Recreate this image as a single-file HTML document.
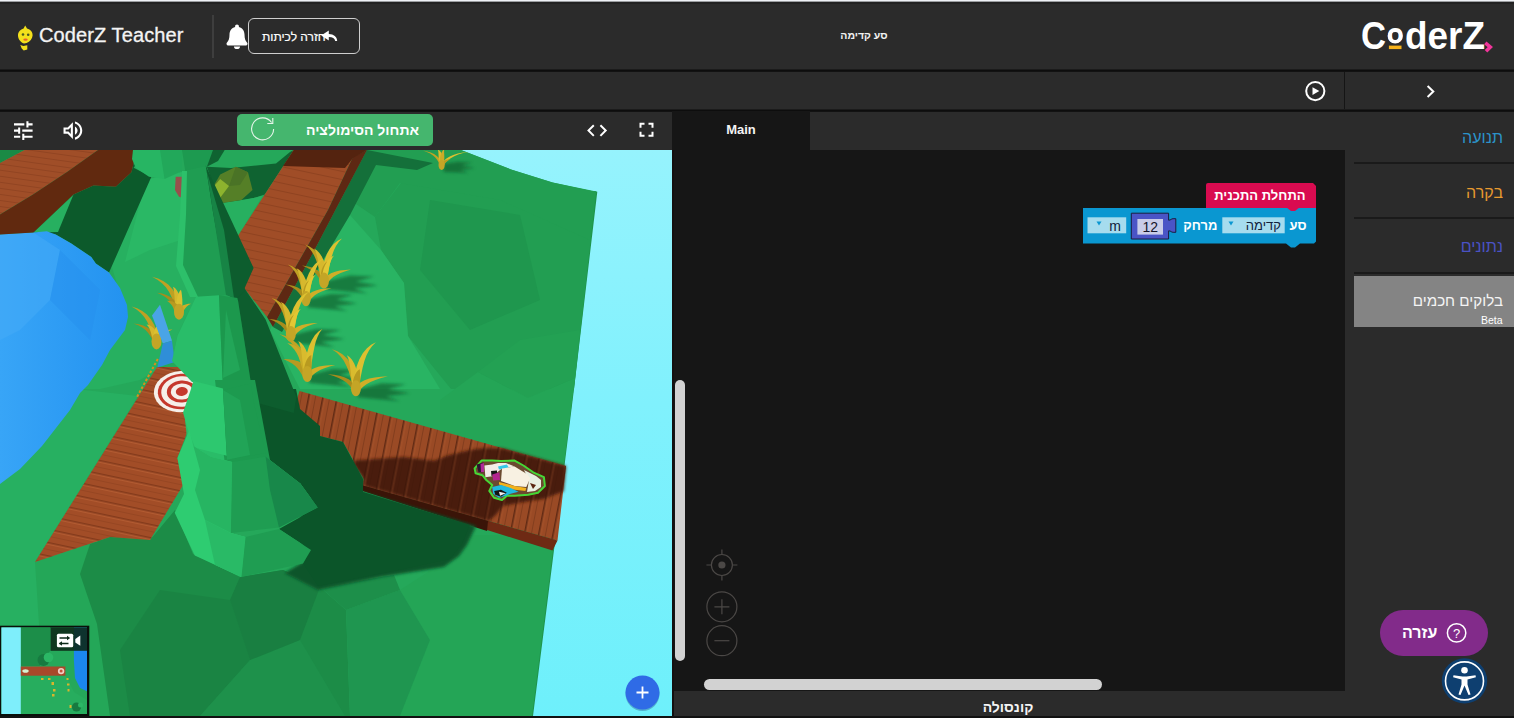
<!DOCTYPE html>
<html lang="he">
<head>
<meta charset="utf-8">
<title>CoderZ</title>
<style>
*{box-sizing:border-box;margin:0;padding:0}
html,body{width:1514px;height:718px;overflow:hidden;background:#2b2b2b;font-family:"Liberation Sans",sans-serif;color:#fff}
.abs{position:absolute}
#root{position:relative;width:1514px;height:718px;background:#2b2b2b;overflow:hidden}
#topline{left:0;top:0;width:1514px;height:4px;background:linear-gradient(#eef1f5 0,#eef1f5 1px,#8c8e90 1.600px,#222 2.400px,#222 4px)}
#sep1{left:0;top:68.800px;width:1514px;height:3.300px;background:linear-gradient(#232323,#0d0d0d 45%,#0d0d0d 75%,#1c1c1c)}
#sep2{left:0;top:108.500px;width:1514px;height:3.300px;background:linear-gradient(#232323,#0d0d0d 45%,#0d0d0d 75%,#1c1c1c)}
#vsep{left:212.200px;top:14.500px;width:1.500px;height:43px;background:#3e3e3e}
#brand{left:39px;top:23px;font-size:20px;line-height:24px;color:#f4f4f4;white-space:nowrap;letter-spacing:.1px;-webkit-text-stroke:.3px #f4f4f4}
#backbtn{left:248px;top:18px;width:112px;height:36px;border:1.400px solid #cfcfcf;border-radius:6px}
#backtxt{left:262px;top:28.500px;font-size:12px;line-height:16px;-webkit-text-stroke:.2px #fff;color:#fff;white-space:nowrap;direction:rtl}
#title{left:819px;top:28px;width:90px;text-align:center;font-size:10.500px;line-height:14px;color:#f2f2f2;direction:rtl;white-space:nowrap;font-weight:bold}
#tabmain{left:672px;top:111px;width:138px;height:39px;background:#161616}
#tabmaintxt{left:672px;top:122px;width:138px;text-align:center;font-size:13px;line-height:16px;color:#f4f4f4;font-weight:bold}
#work{left:672px;top:150px;width:673px;height:541.300px;background:#161616}
#workedge{left:672.300px;top:150px;width:1.700px;height:566px;background:#141010}
#vsep2{left:1344px;top:72px;width:1px;height:37px;background:#151515}
#console{left:674px;top:691.300px;width:671px;height:25px;background:#2b2b2b}
#consoletxt{left:960px;top:698px;width:96px;text-align:center;font-size:14px;line-height:18px;font-weight:bold;color:#f4f4f4;direction:rtl}
#botline{left:0;top:716px;width:1514px;height:2px;background:#111}
.cat{right:11px;font-size:16px;line-height:20px;direction:rtl;white-space:nowrap}
.catline{left:1354px;width:160px;height:2px;background:#1a1a1a}
#smart{left:1354px;top:276px;width:160px;height:51px;background:#848484}
#hscroll{left:704px;top:678.500px;width:398px;height:11.300px;border-radius:6px;background:#d2d2d2}
#vscroll{left:674.700px;top:380px;width:10px;height:281px;border-radius:5px;background:#d2d2d2}
#help{left:1380px;top:610px;width:108px;height:46px;border-radius:23px;background:#822b8a}
#helptxt{left:1402px;top:624px;font-size:16px;line-height:18px;font-weight:bold;color:#fff;direction:rtl}
#restart{left:237.200px;top:113.800px;width:196px;height:31.900px;border-radius:5px;background:#45b66e}
#restarttxt{left:297px;top:121px;width:122px;text-align:right;font-size:14px;line-height:18px;font-weight:bold;color:#fff;direction:rtl;white-space:nowrap}
svg{position:absolute;overflow:visible}
</style>
</head>
<body>
<div id="root">
<div class="abs" id="topline"></div>
<div class="abs" id="sep1"></div>
<div class="abs" id="sep2"></div>
<div class="abs" id="vsep"></div>
<div class="abs" id="vsep2"></div>
<div class="abs" id="brand">CoderZ Teacher</div>
<div class="abs" id="backbtn"></div>
<div class="abs" id="backtxt">חזרה לכיתות</div>
<div class="abs" id="title">סע קדימה</div>

<svg id="scene" style="left:0;top:150px" width="672" height="566" viewBox="0 150 672 566">
<defs>
<linearGradient id="sky" x1="0" y1="0" x2="0" y2="1"><stop offset="0" stop-color="#96f3fd"/><stop offset="0.45" stop-color="#80f1fd"/><stop offset="1" stop-color="#6ef0fb"/></linearGradient>
<linearGradient id="wat" x1="0" y1="0" x2="1" y2="0"><stop offset="0" stop-color="#38a5f7"/><stop offset="1" stop-color="#2392f0"/></linearGradient>
<clipPath id="sc"><rect x="0" y="150" width="672" height="566"/></clipPath>
<filter id="bl" x="-20%" y="-20%" width="140%" height="140%"><feGaussianBlur stdDeviation="1.5"/></filter>
<pattern id="plankA" width="14" height="14" patternUnits="userSpaceOnUse" patternTransform="rotate(11)"><rect x="0" y="0" width="1.600" height="14" fill="#3c1608" opacity=".6"/><rect x="1.600" y="0" width="2" height="14" fill="#c46a38" opacity=".18"/><rect x="7" y="0" width="1" height="14" fill="#3c1608" opacity=".25"/></pattern>
<pattern id="plankD" width="13" height="13" patternUnits="userSpaceOnUse" patternTransform="rotate(12)"><rect x="0" y="0" width="13" height="1.600" fill="#6b2c12" opacity=".55"/><rect x="0" y="1.600" width="13" height="1.400" fill="#d87a48" opacity=".3"/><rect x="0" y="7" width="13" height="1" fill="#6b2c12" opacity=".22"/></pattern>
<pattern id="plankB" width="8" height="8" patternUnits="userSpaceOnUse" patternTransform="rotate(12)"><rect x="0" y="0" width="8" height="1.1" fill="#6b2c12" opacity=".3"/></pattern>
<pattern id="plankC" width="6" height="6" patternUnits="userSpaceOnUse" patternTransform="rotate(8)"><rect x="0" y="0" width="6" height="1" fill="#6b2c12" opacity=".28"/></pattern>
<g id="tuft" fill="none" stroke-linecap="round">
<path d="M3,1 C12,0 22,3 34,1 M4,-3 C12,-4 20,-3 28,-7 M3,4 C10,5 18,7 26,6" stroke="#12693a" stroke-width="3" opacity=".55"/>
<path d="M0,0 C-3,-8 -8,-14 -15,-17" stroke="#b8951d" stroke-width="3"/>
<path d="M0,0 C-4,-4 -9,-7 -13,-7" stroke="#a98618" stroke-width="2.600"/>
<path d="M0,0 C-1,-10 -3,-16 -7,-23" stroke="#d8b52c" stroke-width="3.400"/>
<path d="M1,0 C2,-10 5,-18 9,-27" stroke="#e0bd30" stroke-width="3.400"/>
<path d="M2,0 C6,-6 12,-10 19,-11" stroke="#c9a424" stroke-width="3"/>
<path d="M-2,2 L3,2 L1,-8 Z" fill="#c9a424" stroke="none"/>
</g>
</defs>
<g clip-path="url(#sc)">
<!-- ground base -->
<rect x="0" y="150" width="672" height="566" fill="#25a85a"/>
<!-- sky -->
<polygon points="461,150 511,169.500 552.600,182.600 596.300,191.600 573,389 553,550 532,716 672,716 672,150" fill="url(#sky)"/>
<polygon points="594.300,191 597.300,191.800 574,389 554,550 533,716 531,716 552,550 571,389" fill="#1f944c"/>
<!-- ground shade patches -->
<polygon points="375,217 401,183 461,170 552,183 596,192 574,389 451,389 408,336 404,283 381,250" fill="#229e52"/>
<polygon points="330,150 461,150 511,169.500 552.600,182.600 596,192 590,240 500,200 400,183 375,217 350,200" fill="#229e52"/>
<polygon points="430,200 520,215 540,300 470,330 420,270" fill="#1f974e"/>
<polygon points="300,260 350,215 381,250 404,283 408,336 440,389 300,389 270,330" fill="#29b463"/>
<polygon points="440,400 478,372 528,398 575,378 553,550 532,716 400,716 430,640 400,590 464,549 458,535 504,535 566,466 440,430" fill="#24a556"/>
<polygon points="478,372 528,398 575,378 580,330 520,340" fill="#23a153"/>
<polygon points="0,484 40,446 75,389 138,396 35,562 67,550 110,537 97,624 110,716 0,716" fill="#27b061"/>
<polygon points="35,562 110,537 150,540 150,600 110,716 60,716 40,640" fill="#24a758"/>
<polygon points="110,537 150,540 175,510 193,554 240,577 283,570 320,587 346,610 350,716 110,716 97,624 80,574 90,544" fill="#1c8c47"/>
<polygon points="160,590 230,600 250,660 200,716 130,716 120,650" fill="#1a8443"/>
<polygon points="200,716 250,660 300,640 345,716" fill="#1e914b"/>
<polygon points="240,577 283,570 320,587 300,640 250,660 230,600" fill="#197f41"/>
<polygon points="346,610 400,590 430,640 400,716 350,716" fill="#1f9650"/>
<polygon points="320,587 394,575 400,590 346,610" fill="#1d8f4a"/>
<!-- light strip left of tree -->
<polygon points="149,179 182,172 181,265 196,297 177.500,335 172,361 140,380 100,389 75,389 85,340 127,320 110,260 142,194.500" fill="#27b060"/>
<polygon points="149,179 182,172 181,240 150,250 125,262 142,194.500" fill="#2ab865"/>
<!-- shadow under top-left bridge -->
<polygon points="73.500,194.500 93.500,185.600 115.800,186.700 131.400,172.300 137,150 146,150 133.600,167.800 151.400,176.700 109,272.500 95.800,263.600 91.300,257 71.300,243.500 55.700,234.600 33.400,232.400" fill="#0c5a2b"/>
<polygon points="33.400,232.400 73.500,194.500 58,232" fill="#27b060"/>
<!-- shadow band right of tree top with bush -->
<polygon points="206.900,166.700 231,168 276,163.400 290,152 293.700,150 264.800,194.500 253.600,198 240,201 220,203 213.500,185.600" fill="#0f6331"/>
<polygon points="200,150 224.700,150 218,161 206.900,166.700" fill="#0f6331"/>
<polygon points="220,203.500 253.600,198 262.500,195.700 238,235.700 221,214.600" fill="#27b060"/>
<polygon points="367,150 433,163 417,170 376,165 350,215 322,262 282,332 273,327 313,253 337,207" fill="#14703a"/>
<!-- water -->
<polygon points="0,234.600 33.400,232.400 46.800,231.300 55.700,234.600 71.300,243.500 91.300,257 95.800,263.600 109,272.500 120,288 127,305 128,317 125,330 110,350 102,365 88,385 80,393 70,410 42,446 20,469 0,484" fill="url(#wat)"/>
<polygon points="0,234.600 33.400,232.400 60,250 50,300 20,330 0,340" fill="#45acf8" opacity=".5"/>
<polygon points="60,250 100,290 90,340 50,300" fill="#2590ee" opacity=".5"/>
<!-- top-left bridge -->
<polygon points="0,150 24.500,150 0,163" fill="#1a8a45"/>
<polygon points="0,163 24.500,150 98,150 67,172 33,194.500 0,214.600" fill="#a04e28"/>
<polygon points="0,163 24.500,150 98,150 67,172 33,194.500 0,214.600" fill="url(#plankC)"/>
<polygon points="98,150 137,150 131.400,172.300 115.800,186.700 93.500,185.600 73.500,194.500 33.400,232.400 0,234.600 0,214.600 33,194.500 67,172" fill="#61290f"/>
<!-- centre bridge -->
<polygon points="293.700,150 353,157 328,210 307,247 267,317 244,288 238,235.700" fill="#a04d27"/>
<polygon points="293.700,150 353,157 328,210 307,247 267,317 244,288 238,235.700" fill="url(#plankB)"/>
<polygon points="353,157 367,150 337,207 313,253 273,327 267,317 307,247 328,210" fill="#5e2813"/>
<polygon points="293.700,150 367,150 353,158 345,168 283,166" fill="#54230f"/>
<!-- lower-left bridge -->
<polygon points="157,367 205,367 205,430 188,430 177.400,458 184,483.400 150,540 110,537 35,562" fill="#a24d27"/>
<polygon points="157,367 205,367 205,430 188,430 177.400,458 184,483.400 150,540 110,537 35,562" fill="url(#plankD)"/>
<!-- main bridge -->
<polygon points="299.500,391 566,466 557.500,540.500 363,485.500 364,479 343,442 319.500,436 319.500,426 294.500,407" fill="#9a4a25"/>
<polygon points="363,485.500 557.500,540.500 552.500,550.500 363,491" fill="#6e2a14"/>
<polygon points="350.900,460.800 403.300,457 434,460.800 448.600,455.300 470.300,450 484.800,448 503,448.500 566,466 563.500,491.500 553.600,495 544.500,498.800 521,502.400 503,506 495.700,515 488.400,521 363,485.500 364,479" fill="#4a1e0e" filter="url(#bl)"/>
<polygon points="363,485.500 488,521 487,531 363,491" fill="#3a1408"/>
<polygon points="299.500,391 566,466 557.500,540.500 363,485.500 364,479 343,442 319.500,436 319.500,426 294.500,407" fill="url(#plankA)"/>
<!-- tree shadow on ground -->
<g filter="url(#bl)"><polygon points="300,500 363,492 476,526 467,545 459,556 444,567 381,577 318,590 284.500,573 303,562" fill="#0b5529"/></g>
<polygon points="246,389 296,389 300,409 320,426 320,436 343,442 363,479 363,492 470,525 462,544 450,559 394,571 318,586 303,563.600 311,550 279,529 317.700,507.500 300.300,483.400 265.600,456.700 253.600,402" fill="#0b5529"/>
<!-- olive bush -->
<polygon points="212.400,187.900 220.200,174.500 235.800,166.700 248,172.300 252.500,190 241.400,200 219,203.500 214.700,194.500" fill="#557f27"/>
<polygon points="212.400,187.900 220.200,179 229,186 220,198 214.700,194.500" fill="#8db32e"/>
<polygon points="229,186 235.800,166.700 248,172.300 240,185" fill="#4a7326"/>
<!-- blue arrow + target + tufts behind tree -->
<path d="M180.9,316.5 L180.3,308.6 L178.8,301.4 L176.2,295.0 L172.7,289.5 L168.5,284.8 L163.6,281.2 L158.0,278.5 L152.0,276.7 L152.0,276.7 L157.4,279.7 L162.0,283.2 L165.9,287.3 L169.1,291.9 L171.6,297.2 L173.8,303.0 L175.7,309.5 L177.1,316.9 Z" fill="#bfa023"/>
<path d="M180.7,316.5 L180.2,311.6 L178.9,307.1 L176.8,303.1 L173.9,299.7 L170.4,297.1 L166.3,295.0 L161.9,293.6 L157.0,292.7 L157.0,292.7 L161.5,294.7 L165.3,297.0 L168.4,299.6 L170.9,302.5 L172.9,305.6 L174.7,308.9 L176.1,312.6 L177.3,316.9 Z" fill="#a88c1c"/>
<path d="M181.2,316.6 L181.6,310.8 L181.5,305.5 L180.9,300.8 L179.8,296.7 L178.4,293.1 L176.8,290.3 L175.0,288.1 L173.0,286.7 L173.0,286.7 L173.6,288.9 L174.0,291.4 L174.3,294.3 L174.6,297.7 L174.8,301.7 L175.3,306.1 L176.0,311.1 L176.8,316.8 Z" fill="#d6b82d"/>
<path d="M181.2,316.7 L181.9,311.6 L182.3,307.0 L182.4,302.9 L182.3,299.3 L182.0,296.3 L181.7,293.6 L181.4,291.5 L181.0,289.7 L181.0,289.7 L179.8,291.1 L178.7,293.2 L177.7,295.8 L176.9,299.0 L176.3,302.6 L176.1,306.8 L176.3,311.5 L176.8,316.7 Z" fill="#dcc030"/>
<path d="M180.9,316.9 L181.7,314.8 L182.6,313.0 L183.4,311.4 L184.2,309.8 L185.3,308.2 L186.8,306.6 L188.7,305.1 L191.0,303.7 L191.0,303.7 L188.2,303.8 L185.6,304.4 L183.2,305.3 L181.0,306.7 L179.1,308.6 L177.8,311.0 L177.2,313.6 L177.1,316.5 Z" fill="#cfae28"/>
<path d="M181.2,316.5 L181.3,313.1 L180.7,309.9 L179.5,307.0 L177.5,304.7 L175.2,302.9 L172.6,301.6 L169.9,300.9 L167.0,300.7 L167.0,300.7 L169.2,302.4 L171.0,304.2 L172.3,306.0 L173.3,307.9 L174.0,309.9 L174.9,311.9 L175.8,314.2 L176.8,316.9 Z" fill="#b89a20"/>
<ellipse cx="179.0" cy="311.7" rx="5.0" ry="8.0" fill="#c4a526"/>
<path d="M158.4,346.3 L157.9,338.4 L156.5,331.2 L154.2,324.8 L150.9,319.2 L146.9,314.6 L142.3,310.9 L137.1,308.2 L131.5,306.4 L131.5,306.4 L136.5,309.4 L140.7,312.9 L144.2,317.0 L147.1,321.6 L149.5,326.8 L151.5,332.6 L153.3,339.2 L154.6,346.5 Z" fill="#bfa023"/>
<path d="M158.2,346.2 L157.7,341.5 L156.3,337.1 L154.1,333.2 L151.0,330.0 L147.4,327.5 L143.2,325.5 L138.6,324.2 L133.5,323.4 L133.5,323.4 L138.2,325.3 L142.2,327.6 L145.5,330.1 L148.2,332.9 L150.3,335.9 L152.1,339.0 L153.6,342.6 L154.8,346.6 Z" fill="#a88c1c"/>
<path d="M158.7,346.3 L158.9,341.9 L158.5,337.8 L157.5,334.1 L155.9,331.0 L153.9,328.4 L151.6,326.4 L149.1,325.1 L146.5,324.4 L146.5,324.4 L148.1,326.3 L149.4,328.4 L150.3,330.7 L151.1,333.2 L151.7,336.0 L152.5,339.1 L153.3,342.6 L154.3,346.5 Z" fill="#d6b82d"/>
<path d="M158.8,346.4 L159.3,342.6 L159.6,339.1 L159.6,336.1 L159.2,333.4 L158.6,331.1 L158.0,329.1 L157.3,327.6 L156.5,326.4 L156.5,326.4 L155.7,327.6 L155.0,329.1 L154.4,331.1 L153.8,333.4 L153.4,336.1 L153.4,339.1 L153.7,342.6 L154.2,346.4 Z" fill="#dcc030"/>
<path d="M158.2,346.6 L159.1,343.7 L160.2,341.2 L161.4,338.9 L162.8,336.7 L164.5,334.7 L166.6,332.7 L169.3,331.0 L172.5,329.4 L172.5,329.4 L168.9,329.8 L165.6,330.7 L162.5,332.1 L159.8,334.0 L157.6,336.4 L156.0,339.3 L155.1,342.6 L154.8,346.2 Z" fill="#cfae28"/>
<ellipse cx="156.5" cy="341.4" rx="5.0" ry="8.0" fill="#c4a526"/>
<polygon points="152,315.400 160,304.700 172,340.800 162.800,343.400" fill="#4aa4e6"/>
<polygon points="162.800,343.400 172,340.800 174.800,362 157.400,367.500" fill="#2f8ed8"/>
<path d="M157.800,359 L137,397" stroke="#d9901c" stroke-width="2" stroke-dasharray="2.500 2"/>
<g transform="translate(181.800,391.500) rotate(-4)">
<ellipse rx="28" ry="20.600" fill="#f6efe9"/><ellipse rx="24" ry="17.700" fill="#c5382c"/><ellipse rx="20.600" ry="15.200" fill="#f6efe9"/><ellipse rx="15" ry="11" fill="#c5382c"/><ellipse rx="11" ry="8.100" fill="#f6efe9"/><ellipse rx="6" ry="4.400" fill="#c5382c"/>
</g>
<!-- tree trunk + foliage -->
<polygon points="182,150 213,150 206.900,166.700 186,176" fill="#1d9a50"/>
<polygon points="133,150 182,150 182,171 164.500,179 149,176.700 135.600,167.800 132,159" fill="#27b563"/>
<polygon points="160,150 182,150 182,171 164.500,179" fill="#22a85a"/>
<polygon points="175.700,176.700 183.500,176.700 183.500,198 179,196.800 175,190" fill="#96504c"/>
<!-- cone tier1 -->
<polygon points="183.500,171 206,166 215.800,212 231.400,295 198,297 179,266 183,200" fill="#1f9d52"/>
<polygon points="182,171 187,171 186,215 183,265 198,297 190,297 176,266 180,215" fill="#2dc06a"/>
<polygon points="205.700,165.600 253.600,268 244.700,288 253.600,310 237,300 228,295 213,212" fill="#0d5d2e"/>
<polygon points="206.900,172 213,212 226,295 234,298 224,230" fill="#178445"/>
<!-- tier2 -->
<polygon points="196,296.700 219,295.300 223,390 192,382 172,361 177.500,335.400" fill="#29bd69"/>
<polygon points="219,295.300 237.600,298 251,383.500 223,390" fill="#1c984d"/>
<polygon points="226,310 240,370 223,378" fill="#22a658"/>
<polygon points="237.600,298 245.600,290 265.600,319.400 296.400,397 293.700,413 253.600,402 251,383.500" fill="#0d5d2e"/>
<!-- tier3 -->
<polygon points="185,420 230,420 232,465 190,465" fill="#2abc68"/>
<polygon points="215,380 255,380 270,460 225,465" fill="#1d9a4f"/>
<polygon points="193.500,381 223,388.500 227,455.700 195,447.700 188,430 183,412.400 190,392" fill="#2dc86f"/>
<polygon points="223,390 251,383.500 253.600,402 265.600,453 227,459.700" fill="#1d9a4f"/>
<polygon points="223,390 240,400 250,455 227,459.700" fill="#21a457"/>
<!-- tier4/5 light -->
<polygon points="189.400,430 193.400,446 210.800,456.700 232.200,462 230.900,533 245.600,537 241.500,577 194.800,555.600 174.700,512.800 184,494 177.400,458" fill="#2ecc71"/>
<polygon points="193.400,446 210.800,456.700 232.200,462 230.900,533 205,520 195,490 200,470" fill="#27b562"/>
<polygon points="205,520 230.900,533 245.600,537 241.500,577 215,565" fill="#29ba66"/>
<polygon points="232.200,462 265.600,456.700 300.300,483.400 317.700,507.500 279,527.500 230.900,533" fill="#1f9d52"/>
<polygon points="265.600,456.700 300.300,483.400 317.700,507.500 279,527.500 270,490" fill="#18884a"/>
<polygon points="245.600,537 279,529 311,550 303,563.600 241.500,577" fill="#1f9d52"/>
<!-- grass tufts -->
<g filter="url(#bl)" opacity=".62" fill="#0c5a2c"><polygon points="443.6,164.0 457.7,161.8 472.6,162.4 461.4,165.5 475.1,168.0 460.2,169.9 468.9,173.0 443.6,172.0"/></g>
<path d="M442.5,167.9 L442.0,164.4 L440.9,161.1 L439.1,158.3 L436.8,155.9 L434.0,154.0 L430.7,152.5 L427.1,151.4 L423.0,150.6 L423.0,150.6 L426.9,152.0 L430.2,153.6 L433.0,155.4 L435.3,157.5 L437.1,159.8 L438.6,162.3 L439.8,165.0 L440.7,168.1 Z" fill="#c2a324"/>
<path d="M443.2,168.0 L443.5,164.3 L443.5,161.1 L443.1,158.1 L442.4,155.5 L441.5,153.3 L440.4,151.6 L439.2,150.2 L437.9,149.4 L437.9,149.4 L438.2,150.8 L438.4,152.4 L438.5,154.2 L438.6,156.3 L438.7,158.7 L439.0,161.5 L439.4,164.6 L440.0,168.0 Z" fill="#d9bb2e"/>
<path d="M443.2,168.0 L443.7,164.5 L444.1,161.4 L444.3,158.6 L444.3,156.2 L444.2,154.0 L444.1,152.2 L444.1,150.7 L444.1,149.4 L444.1,149.4 L443.0,150.3 L442.0,151.7 L441.2,153.5 L440.4,155.7 L439.9,158.2 L439.6,161.1 L439.7,164.4 L440.0,168.0 Z" fill="#c9ab27"/>
<path d="M442.4,168.2 L443.5,165.4 L445.2,162.8 L447.4,160.5 L450.3,158.4 L453.8,156.4 L458.1,154.6 L463.1,153.1 L468.9,151.9 L468.9,151.9 L463.0,152.6 L457.8,153.6 L453.2,154.9 L449.3,156.7 L446.0,158.8 L443.4,161.5 L441.7,164.5 L440.8,167.8 Z" fill="#dcc030"/>
<path d="M442.8,168.1 L443.3,166.7 L443.9,165.5 L444.5,164.4 L445.2,163.3 L446.0,162.3 L447.2,161.2 L448.6,160.2 L450.3,159.3 L450.3,159.3 L448.3,159.4 L446.5,159.8 L444.8,160.5 L443.2,161.4 L441.9,162.6 L441.0,164.2 L440.5,166.0 L440.4,167.9 Z" fill="#b89a20"/>
<ellipse cx="441.6" cy="164.9" rx="3.1" ry="5.0" fill="#c4a526"/>
<g filter="url(#bl)" opacity=".62" fill="#0c5a2c"><polygon points="326.0,281.6 350.0,275.6 374.0,276.6 356.0,281.6 378.0,285.6 354.0,288.6 368.0,293.6 326.0,289.6"/></g>
<path d="M325.7,285.4 L325.2,281.2 L323.9,277.3 L321.7,273.9 L318.7,271.1 L315.2,268.9 L311.3,267.3 L306.9,266.2 L302.0,265.6 L302.0,265.6 L306.5,267.4 L310.3,269.4 L313.5,271.6 L316.1,274.1 L318.1,276.7 L319.7,279.4 L321.2,282.4 L322.3,285.8 Z" fill="#a88c1c"/>
<path d="M326.1,285.5 L325.8,277.5 L324.9,270.1 L323.1,263.6 L320.5,257.9 L317.3,253.1 L313.6,249.3 L309.5,246.4 L305.0,244.6 L305.0,244.6 L308.6,247.6 L311.6,251.2 L314.0,255.3 L316.1,260.0 L317.8,265.3 L319.3,271.3 L320.7,278.1 L321.9,285.7 Z" fill="#bfa023"/>
<path d="M326.4,285.5 L326.7,278.3 L326.3,271.8 L325.4,265.9 L323.8,260.8 L321.8,256.4 L319.4,252.9 L316.8,250.3 L314.0,248.6 L314.0,248.6 L315.4,251.3 L316.6,254.5 L317.5,258.1 L318.2,262.3 L318.9,267.1 L319.7,272.6 L320.6,278.8 L321.6,285.7 Z" fill="#d6b82d"/>
<path d="M326.2,285.7 L327.5,276.9 L328.9,269.1 L330.3,262.2 L331.9,256.0 L333.8,250.6 L336.0,246.0 L338.7,242.0 L342.0,238.6 L342.0,238.6 L337.6,240.8 L333.6,244.1 L330.0,248.6 L326.9,254.1 L324.4,260.6 L322.7,268.0 L321.9,276.3 L321.8,285.5 Z" fill="#dcc030"/>
<path d="M325.8,286.0 L327.1,283.5 L328.7,281.4 L330.7,279.3 L333.2,277.1 L336.5,275.0 L340.6,273.0 L345.4,271.2 L351.0,269.6 L351.0,269.6 L345.1,269.9 L339.8,270.6 L335.1,271.7 L331.0,273.3 L327.4,275.4 L324.7,278.2 L322.9,281.6 L322.2,285.2 Z" fill="#cfae28"/>
<path d="M326.6,285.6 L327.4,281.1 L327.9,277.1 L328.1,273.5 L328.0,270.4 L327.8,267.7 L327.5,265.3 L327.2,263.3 L327.0,261.6 L327.0,261.6 L325.5,262.7 L324.1,264.5 L322.9,266.8 L321.8,269.6 L321.0,272.9 L320.7,276.7 L320.8,280.9 L321.4,285.6 Z" fill="#b89a20"/>
<path d="M325.9,285.7 L326.7,280.1 L327.6,275.1 L328.4,270.7 L329.1,266.8 L330.0,263.4 L331.1,260.4 L332.4,257.8 L334.0,255.6 L334.0,255.6 L331.4,256.9 L328.9,259.0 L326.8,261.9 L324.9,265.4 L323.4,269.6 L322.4,274.3 L322.0,279.7 L322.1,285.5 Z" fill="#e2c733"/>
<ellipse cx="324.0" cy="280.6" rx="5.0" ry="8.0" fill="#c4a526"/>
<g filter="url(#bl)" opacity=".62" fill="#0c5a2c"><polygon points="308.0,299.4 330.7,293.9 353.5,294.8 336.4,299.6 357.3,303.4 334.5,306.2 347.8,311.0 308.0,307.4"/></g>
<path d="M307.6,303.2 L307.1,299.2 L305.9,295.5 L303.8,292.3 L301.0,289.6 L297.7,287.6 L293.9,286.0 L289.7,285.0 L285.1,284.4 L285.1,284.4 L289.4,286.1 L293.0,288.0 L296.0,290.1 L298.4,292.5 L300.3,294.9 L301.9,297.5 L303.3,300.4 L304.4,303.6 Z" fill="#a88c1c"/>
<path d="M308.0,303.3 L307.8,295.7 L306.8,288.7 L305.2,282.5 L302.7,277.1 L299.7,272.6 L296.1,268.9 L292.2,266.2 L287.9,264.4 L287.9,264.4 L291.4,267.3 L294.2,270.7 L296.5,274.6 L298.5,279.1 L300.1,284.1 L301.5,289.8 L302.9,296.3 L304.0,303.5 Z" fill="#bfa023"/>
<path d="M308.3,303.3 L308.5,296.5 L308.2,290.3 L307.3,284.7 L305.8,279.8 L303.9,275.7 L301.7,272.3 L299.2,269.8 L296.5,268.2 L296.5,268.2 L297.9,270.8 L298.9,273.8 L299.8,277.3 L300.5,281.3 L301.1,285.9 L301.9,291.1 L302.8,296.9 L303.7,303.5 Z" fill="#d6b82d"/>
<path d="M308.1,303.5 L309.3,295.2 L310.6,287.7 L312.0,281.1 L313.5,275.3 L315.3,270.2 L317.4,265.8 L320.0,262.0 L323.1,258.8 L323.1,258.8 L319.0,260.8 L315.1,264.0 L311.7,268.2 L308.8,273.5 L306.4,279.6 L304.8,286.7 L304.0,294.6 L303.9,303.3 Z" fill="#dcc030"/>
<path d="M307.7,303.8 L309.0,301.4 L310.5,299.4 L312.4,297.4 L314.8,295.3 L317.9,293.3 L321.7,291.4 L326.3,289.7 L331.6,288.2 L331.6,288.2 L326.1,288.5 L321.0,289.1 L316.6,290.2 L312.6,291.7 L309.2,293.7 L306.6,296.4 L304.9,299.6 L304.3,303.0 Z" fill="#cfae28"/>
<path d="M308.5,303.4 L309.2,299.2 L309.7,295.3 L309.9,291.9 L309.8,288.9 L309.6,286.4 L309.3,284.1 L309.1,282.3 L308.9,280.6 L308.9,280.6 L307.4,281.7 L306.1,283.3 L304.9,285.5 L303.9,288.2 L303.2,291.3 L302.8,294.9 L303.0,298.9 L303.5,303.4 Z" fill="#b89a20"/>
<path d="M307.8,303.5 L308.6,298.2 L309.4,293.4 L310.1,289.3 L310.9,285.5 L311.7,282.3 L312.7,279.5 L313.9,277.0 L315.5,274.9 L315.5,274.9 L313.0,276.2 L310.7,278.2 L308.6,280.9 L306.8,284.2 L305.4,288.2 L304.5,292.7 L304.1,297.8 L304.2,303.3 Z" fill="#e2c733"/>
<ellipse cx="306.0" cy="298.6" rx="4.8" ry="7.6" fill="#c4a526"/>
<g filter="url(#bl)" opacity=".62" fill="#0c5a2c"><polygon points="292.8,334.9 316.8,328.9 340.8,329.9 322.8,334.9 344.8,338.9 320.8,341.9 334.8,346.9 292.8,342.9"/></g>
<path d="M292.5,338.7 L292.0,334.5 L290.7,330.6 L288.5,327.2 L285.5,324.4 L282.0,322.2 L278.1,320.6 L273.7,319.5 L268.8,318.9 L268.8,318.9 L273.3,320.7 L277.1,322.7 L280.3,324.9 L282.9,327.4 L284.9,330.0 L286.5,332.7 L288.0,335.7 L289.1,339.1 Z" fill="#a88c1c"/>
<path d="M292.9,338.8 L292.6,330.8 L291.7,323.4 L289.9,316.9 L287.3,311.2 L284.1,306.4 L280.4,302.6 L276.3,299.7 L271.8,297.9 L271.8,297.9 L275.4,300.9 L278.4,304.5 L280.8,308.6 L282.9,313.3 L284.6,318.6 L286.1,324.6 L287.5,331.4 L288.7,339.0 Z" fill="#bfa023"/>
<path d="M293.2,338.8 L293.5,331.6 L293.1,325.1 L292.2,319.2 L290.6,314.1 L288.6,309.7 L286.2,306.2 L283.6,303.6 L280.8,301.9 L280.8,301.9 L282.2,304.6 L283.4,307.8 L284.3,311.4 L285.0,315.6 L285.7,320.4 L286.5,325.9 L287.4,332.1 L288.4,339.0 Z" fill="#d6b82d"/>
<path d="M293.0,339.0 L294.3,330.2 L295.7,322.4 L297.1,315.5 L298.7,309.3 L300.6,303.9 L302.8,299.3 L305.5,295.3 L308.8,291.9 L308.8,291.9 L304.4,294.1 L300.4,297.4 L296.8,301.9 L293.7,307.4 L291.2,313.9 L289.5,321.3 L288.7,329.6 L288.6,338.8 Z" fill="#dcc030"/>
<path d="M292.6,339.3 L293.9,336.8 L295.5,334.7 L297.5,332.6 L300.0,330.4 L303.3,328.3 L307.4,326.3 L312.2,324.5 L317.8,322.9 L317.8,322.9 L311.9,323.2 L306.6,323.9 L301.9,325.0 L297.8,326.6 L294.2,328.7 L291.5,331.5 L289.7,334.9 L289.0,338.5 Z" fill="#cfae28"/>
<path d="M293.4,338.9 L294.2,334.4 L294.7,330.4 L294.9,326.8 L294.8,323.7 L294.6,321.0 L294.3,318.6 L294.0,316.6 L293.8,314.9 L293.8,314.9 L292.3,316.0 L290.9,317.8 L289.7,320.1 L288.6,322.9 L287.8,326.2 L287.5,330.0 L287.6,334.2 L288.2,338.9 Z" fill="#b89a20"/>
<path d="M292.7,339.0 L293.5,333.4 L294.4,328.4 L295.2,324.0 L295.9,320.1 L296.8,316.7 L297.9,313.7 L299.2,311.1 L300.8,308.9 L300.8,308.9 L298.2,310.2 L295.7,312.3 L293.6,315.2 L291.7,318.7 L290.2,322.9 L289.2,327.6 L288.8,333.0 L288.9,338.8 Z" fill="#e2c733"/>
<ellipse cx="290.8" cy="333.9" rx="5.0" ry="8.0" fill="#c4a526"/>
<g filter="url(#bl)" opacity=".62" fill="#0c5a2c"><polygon points="309.3,375.0 333.3,369.0 357.3,370.0 339.3,375.0 361.3,379.0 337.3,382.0 351.3,387.0 309.3,383.0"/></g>
<path d="M309.4,378.8 L308.8,370.0 L307.2,361.9 L304.6,354.7 L301.0,348.5 L296.5,343.3 L291.4,339.1 L285.6,336.0 L279.3,334.0 L279.3,334.0 L284.9,337.3 L289.6,341.3 L293.6,345.8 L296.8,351.0 L299.5,356.9 L301.8,363.5 L303.7,370.9 L305.2,379.2 Z" fill="#c2a324"/>
<path d="M310.3,378.6 L310.0,374.0 L308.5,369.7 L305.9,366.1 L302.4,363.3 L298.3,361.2 L293.7,359.9 L288.7,359.2 L283.3,359.0 L283.3,359.0 L288.1,361.2 L292.1,363.6 L295.3,366.1 L297.8,368.7 L299.7,371.3 L301.3,373.8 L302.8,376.4 L304.3,379.4 Z" fill="#b89a20"/>
<path d="M309.9,378.8 L309.8,371.6 L308.8,365.0 L306.9,359.1 L304.0,354.1 L300.5,349.9 L296.5,346.6 L292.0,344.3 L287.3,343.0 L287.3,343.0 L291.1,345.9 L294.1,349.3 L296.6,353.0 L298.6,357.1 L300.2,361.7 L301.8,366.9 L303.3,372.6 L304.7,379.2 Z" fill="#c9ab27"/>
<path d="M309.7,378.9 L310.0,371.6 L309.8,364.9 L308.9,358.9 L307.4,353.6 L305.6,349.2 L303.4,345.5 L300.9,342.8 L298.3,341.0 L298.3,341.0 L299.5,343.7 L300.4,346.9 L301.2,350.6 L301.8,355.0 L302.3,359.9 L303.0,365.6 L303.9,372.0 L304.9,379.1 Z" fill="#d9bb2e"/>
<path d="M309.5,379.1 L310.7,369.7 L311.9,361.3 L313.1,353.8 L314.4,347.3 L315.8,341.6 L317.6,336.7 L319.7,332.5 L322.3,329.0 L322.3,329.0 L318.5,331.4 L315.0,335.1 L311.9,339.9 L309.2,345.7 L307.1,352.6 L305.7,360.4 L305.1,369.2 L305.1,378.9 Z" fill="#dcc030"/>
<path d="M309.1,379.5 L310.4,377.5 L312.0,375.7 L314.0,373.9 L316.7,371.9 L320.1,370.0 L324.4,368.2 L329.5,366.5 L335.3,365.0 L335.3,365.0 L329.2,365.2 L323.8,365.7 L319.0,366.6 L314.7,367.9 L311.1,369.7 L308.2,372.2 L306.3,375.2 L305.5,378.5 Z" fill="#cfae28"/>
<path d="M309.9,379.1 L310.7,374.6 L311.3,370.6 L311.6,367.0 L311.6,363.9 L311.5,361.2 L311.4,358.9 L311.3,356.8 L311.3,355.0 L311.3,355.0 L309.6,356.0 L308.0,357.7 L306.6,360.1 L305.4,362.9 L304.5,366.2 L304.1,370.0 L304.2,374.3 L304.7,378.9 Z" fill="#b89a20"/>
<ellipse cx="307.3" cy="374.0" rx="5.0" ry="8.0" fill="#c4a526"/>
<g filter="url(#bl)" opacity=".62" fill="#0c5a2c"><polygon points="357.9,389.3 381.9,383.3 405.9,384.3 387.9,389.3 409.9,393.3 385.9,396.3 399.9,401.3 357.9,397.3"/></g>
<path d="M357.6,393.0 L356.8,388.9 L355.0,385.1 L352.3,381.9 L348.6,379.3 L344.3,377.3 L339.5,375.8 L334.0,374.8 L327.9,374.3 L327.9,374.3 L333.7,376.0 L338.7,378.0 L343.0,380.2 L346.4,382.6 L349.0,385.1 L351.2,387.7 L352.9,390.5 L354.2,393.6 Z" fill="#a88c1c"/>
<path d="M358.0,393.2 L357.5,384.5 L356.3,376.7 L354.0,369.6 L350.9,363.5 L347.0,358.4 L342.4,354.3 L337.4,351.3 L331.9,349.3 L331.9,349.3 L336.6,352.5 L340.6,356.4 L343.8,360.8 L346.5,365.9 L348.8,371.6 L350.7,378.0 L352.5,385.3 L353.8,393.4 Z" fill="#c2a324"/>
<path d="M358.3,393.2 L358.6,385.9 L358.4,379.2 L357.5,373.2 L356.0,367.9 L354.2,363.5 L352.0,359.8 L349.5,357.1 L346.9,355.3 L346.9,355.3 L348.1,358.0 L349.0,361.2 L349.8,364.9 L350.4,369.3 L350.9,374.2 L351.6,379.9 L352.5,386.3 L353.5,393.4 Z" fill="#d9bb2e"/>
<path d="M358.1,393.4 L359.4,383.9 L361.0,375.4 L362.6,367.8 L364.4,361.1 L366.5,355.3 L369.1,350.2 L372.2,345.9 L375.9,342.3 L375.9,342.3 L371.1,344.7 L366.7,348.4 L362.8,353.2 L359.4,359.2 L356.7,366.2 L354.8,374.3 L353.9,383.3 L353.7,393.2 Z" fill="#dcc030"/>
<path d="M357.7,393.7 L359.2,391.1 L361.1,388.8 L363.4,386.6 L366.5,384.2 L370.5,382.0 L375.4,379.9 L381.2,378.0 L387.9,376.3 L387.9,376.3 L381.0,376.7 L374.8,377.4 L369.3,378.6 L364.5,380.3 L360.4,382.5 L357.1,385.4 L355.0,389.0 L354.1,392.9 Z" fill="#cfae28"/>
<path d="M358.5,393.4 L359.3,388.9 L359.9,384.9 L360.2,381.3 L360.2,378.2 L360.1,375.5 L360.0,373.2 L359.9,371.1 L359.9,369.3 L359.9,369.3 L358.2,370.3 L356.6,372.0 L355.2,374.4 L354.0,377.2 L353.1,380.5 L352.7,384.3 L352.8,388.6 L353.3,393.2 Z" fill="#b89a20"/>
<ellipse cx="355.9" cy="388.3" rx="5.0" ry="8.0" fill="#c4a526"/>
<!-- robot -->
<polygon points="474.600,468.400 481.500,460.600 492.200,460.600 501,461 514.600,460.600 523.400,465.500 533.200,472.300 543.900,477.200 544.900,486 538,492.800 528.300,494.800 514.600,495.700 506.800,495.700 502,500 494,497.700 489.300,490.900 492.200,485 486.300,480 482.400,475.200 475.600,473.300" fill="#6b4a30" stroke="#46d836" stroke-width="2" stroke-linejoin="round"/>
<polygon points="524,470 536,476 541,480 541,487 535,491 527,492 529,480" fill="#e9efe2"/>
<polygon points="530,483 536,485 533,489" fill="#5a2410"/>
<polygon points="484.400,465.500 492.200,464.500 498,463 506,463 514.600,466.500 502,468.400 492.200,476.200 485.400,477.200" fill="#f3ece6"/>
<polygon points="498,466.500 506.800,464.500 508.800,467.400 499,469.400" fill="#35c8e8"/>
<polygon points="476.600,464.500 483.400,462.600 483.400,472.300 478.500,472.300" fill="#2a1430"/>
<polygon points="480.500,464 484,463 484,472 481,472" fill="#b02a98"/>
<polygon points="502,468.400 514.600,466.500 527.300,474.300 530.200,478.200 526.300,487 514.600,486 501,481" fill="#f8f1e2"/>
<polygon points="491,471 497,470.500 497,475 491.500,476" fill="#151515"/>
<polygon points="492.200,474.500 499.500,472.300 500,480 493.200,480.500" fill="#b3248f"/>
<polygon points="499,482 514.600,486 526.300,488 525.400,491 512.700,489.600 499,484.500" fill="#f2b11c"/>
<polygon points="492.200,487 501,485 510.700,488 518.500,491.800 510.700,493.800 505.900,495.700 499,497.700 493.200,493.800" fill="#1fb9df"/>
<polygon points="494.200,491 501,489.800 506.800,492.800 501,496.700 495.200,494.800" fill="#121212"/>
<polygon points="499,491.800 505.800,493.300 500,495.700" fill="#efefef"/>
<!-- minimap -->
<rect x="0" y="625.700" width="89.300" height="90.300" fill="#0a0f0a"/>
<rect x="1.400" y="627.400" width="85.600" height="86.600" fill="#25a85a"/>
<polygon points="21,627.400 50,627.400 50,651 40,666 21,666" fill="#1c8e49"/>
<polygon points="21,676 66,676 74,692 87,700 87,714 21,714" fill="#27ad5e"/>
<rect x="1.400" y="627.400" width="19.400" height="86.600" fill="#7eeefb"/>
<polygon points="73.900,627.400 87,627.400 87,691.300 80,688 75,678 73.900,660" fill="#1b86ee"/>
<rect x="20.800" y="666.500" width="44.600" height="9.200" fill="#a8482a"/>
<circle cx="61.100" cy="671.100" r="3.200" fill="#f1cfc4"/><circle cx="61.100" cy="671.100" r="1.500" fill="#c8503c"/>
<ellipse cx="25.500" cy="671" rx="3.200" ry="1.800" fill="#d8f0d0"/>
<circle cx="43.500" cy="660" r="6" fill="#177a40"/><circle cx="48.500" cy="657.500" r="4.800" fill="#2bb765"/>
<circle cx="76.500" cy="707" r="4.600" fill="#177a40"/><circle cx="80.500" cy="705" r="2.500" fill="#2bb765"/>
<rect x="50.500" y="627.400" width="36.500" height="23.400" fill="#0d2a18" opacity=".9"/>
<rect x="56.900" y="633.800" width="16.300" height="13.500" rx="1.500" fill="#fff"/>
<polygon points="75.300,639 80.300,635.500 80.300,645.800 75.300,642.500" fill="#fff"/>
<path d="M59.500,638 h9 M59.500,643.500 h9" stroke="#0d2a18" stroke-width="1.700"/>
<path d="M67,635.800 l3.200,2.200 l-3.200,2.200 z M62,641.300 l-3.200,2.200 l3.200,2.200 z" fill="#0d2a18"/>
<g fill="#d8b52c"><rect x="41" y="678" width="2.500" height="2"/><rect x="48" y="678" width="2.500" height="2"/><rect x="51.500" y="682" width="2.500" height="3"/><rect x="53" y="689" width="2.500" height="2.500"/><rect x="52" y="694" width="2.500" height="2.500"/><rect x="66.500" y="678" width="2" height="2"/><rect x="67" y="683.500" width="2.500" height="2"/><rect x="67.500" y="689" width="2" height="2.500"/><rect x="69.500" y="705" width="2" height="3"/></g>
<!-- plus button -->
<circle cx="642.5" cy="694" r="17" fill="#1d3c7a" opacity=".35"/>
<circle cx="642.5" cy="692.5" r="17" fill="#2f6be6"/>
<path d="M636.5,692.5 h12 M642.5,686.5 v12" stroke="#fff" stroke-width="1.8"/>
</g>
</svg>


<div class="abs" id="restart"></div>
<div class="abs" id="restarttxt">אתחול הסימולציה</div>

<div class="abs" id="tabmain"></div>
<div class="abs" id="tabmaintxt">Main</div>
<div class="abs" id="work"></div>
<div class="abs" id="workedge"></div>

<svg id="blocks" style="left:1070px;top:175px" width="260" height="80" viewBox="1070 175 260 80" font-family='"Liberation Sans",sans-serif'>
<path d="M1206,185 q0,-2 2,-2 h105 l3,3 v22 h-110 z" fill="#d90b50"/>
<path d="M1083,208 h233 v33.5 l-2,2 h-14 l-5,4 h-4 l-5,-4 h-203 z" fill="#0a97d1"/>
<path d="M1286,207 l5,4 h4 l5,-4 z" fill="#d90b50"/>
<rect x="1087.5" y="217.3" width="38.7" height="16" fill="#a6dcee"/>
<rect x="1222.3" y="217.3" width="62.4" height="16" fill="#a6dcee"/>
<path d="M1131.3,213.2 h37.3 v7 c2.5,0 2.5,-1.5 4.5,-1.5 h2.7 v13.6 h-2.7 c-2,0 -2,-1.500 -4.500,-1.500 v8.2 h-37.300 z" fill="#4a54c6" stroke="#1c1c3e" stroke-width="1"/>
<rect x="1137.4" y="219" width="25.600" height="15.600" fill="#c9cce8"/>
<text x="1150.2" y="231.700" font-size="14" text-anchor="middle" fill="#15152a">12</text>
<text x="1306.5" y="230" font-size="13" font-weight="bold" fill="#fff" direction="rtl" text-anchor="start">סע</text>
<text x="1281" y="230" font-size="13" fill="#10203a" direction="rtl" text-anchor="start">קדימה</text>
<path d="M1228.5,221.500 h5 l-2.500,4 z" fill="#0a97d1"/>
<text x="1217.5" y="230" font-size="13" font-weight="bold" fill="#fff" direction="rtl" text-anchor="start">מרחק</text>
<text x="1115" y="230.500" font-size="14" text-anchor="middle" fill="#10203a">m</text>
<path d="M1096.5,221.500 h5 l-2.500,4 z" fill="#0a97d1"/>
<text x="1305.5" y="200.400" font-size="13" font-weight="bold" fill="#fff" direction="rtl" text-anchor="start">התחלת התכנית</text>
</svg>
<div class="abs" id="console"></div>
<div class="abs" id="consoletxt">קונסולה</div>
<div class="abs" id="hscroll"></div>
<div class="abs" id="vscroll"></div>

<div class="abs cat" style="top:128px;color:#2b93c9">תנועה</div>
<div class="abs catline" style="top:162px"></div>
<div class="abs cat" style="top:183px;color:#e79a2f">בקרה</div>
<div class="abs catline" style="top:217px"></div>
<div class="abs cat" style="top:237px;color:#4a52c4">נתונים</div>
<div class="abs catline" style="top:272px"></div>
<div class="abs" id="smart"></div>
<div class="abs cat" style="top:291px;color:#f4f4f4;font-size:15.200px">בלוקים חכמים</div>
<div class="abs" style="right:11.500px;top:313.500px;font-size:10.500px;line-height:12px;color:#fff">Beta</div>

<div class="abs" id="help"></div>
<div class="abs" id="helptxt">עזרה</div>

<!-- icons -->
<svg style="left:0;top:0" width="1514" height="718" viewBox="0 0 1514 718" font-family='"Liberation Sans",sans-serif'>
<!-- brand icon -->
<g>
<path d="M25.200,25.500 l1.800,3 c3.500,0.800 5.800,3.600 5.600,7 c-0.200,3.200 -2.600,6 -6,7.600 l-2.600,0.400 c-3.600,-1.400 -6,-4.600 -6,-8 c0,-3.400 2.400,-6 5.600,-7 z" fill="#f3e01c"/>
<circle cx="23" cy="34.500" r="1.300" fill="#4a5a20"/><circle cx="28.200" cy="34.800" r="1.300" fill="#4a5a20"/>
<ellipse cx="25.500" cy="39.600" rx="2.200" ry="1.200" fill="#e8622a"/>
<path d="M20.300,45 l3,1 l4,-0.800 v4.300 l-3.600,1 l-2,-2 z" fill="#f3e01c"/>
</g>
<!-- bell -->
<path d="M237,24.400 c1.100,0 1.900,0.800 1.900,1.800 v0.700 c3.500,0.800 5.600,3.700 5.600,7.600 c0,4.300 1,6.300 2.300,7.700 c0.500,0.500 0.700,1 0.700,1.500 c0,1 -0.800,1.900 -1.900,1.900 h-17.200 c-1.100,0 -1.900,-0.900 -1.900,-1.900 c0,-0.500 0.200,-1 0.700,-1.500 c1.300,-1.400 2.300,-3.400 2.300,-7.700 c0,-3.900 2.100,-6.800 5.600,-7.600 v-0.700 c0,-1 0.800,-1.800 1.900,-1.800 z M233.900,46.400 h6.200 c0,1.600 -1.400,2.600 -3.100,2.600 c-1.700,0 -3.100,-1 -3.100,-2.600 z" fill="#fff"/>
<!-- reply arrow -->
<path d="M321.200,35.600 l7.600,-5 v3.300 c5,0.200 8.200,2.600 8.400,7 h-2 c-0.300,-2.800 -2.600,-4 -6.400,-4 v3.700 z" fill="#fff"/>
<!-- play circle -->
<circle cx="1315.300" cy="91.100" r="9.100" fill="none" stroke="#fff" stroke-width="2"/>
<path d="M1312.500,87.300 l6.800,3.800 l-6.800,3.900 z" fill="#fff"/>
<!-- chevron -->
<path d="M1427.600,86 l5.700,5.500 l-5.700,5.400" fill="none" stroke="#fff" stroke-width="2"/>
<!-- tune -->
<g transform="translate(10.900,118.200) scale(1.033)" fill="#fff"><path d="M3 17v2h6v-2H3zM3 5v2h10V5H3zm10 16v-2h8v-2h-8v-2h-2v6h2zM7 9v2H3v2h4v2h2V9H7zm14 4v-2H11v2h10zm-6-4h2V7h4V5h-4V3h-2v6z"/></g>
<!-- volume -->
<g transform="translate(60.400,118.100) scale(1.040)" fill="#fff"><path d="M3 9v6h4l5 5V4L7 9H3zm7-.17v6.340L7.830 13H5v-2h2.830L10 8.830zM16.500 12c0-1.770-1.020-3.290-2.500-4.030v8.050c1.480-.730 2.500-2.250 2.500-4.020zM14 3.230v2.060c2.890.860 5 3.540 5 6.710s-2.110 5.850-5 6.710v2.060c4.010-.910 7-4.490 7-8.770 0-4.280-2.990-7.860-7-8.770z"/></g>
<!-- code -->
<g transform="translate(585.100,118.600)" fill="#fff"><path d="M9.400 16.600L4.800 12l4.600-4.600L8 6l-6 6 6 6 1.400-1.400zm5.200 0l4.600-4.600-4.600-4.600L16 6l6 6-6 6-1.400-1.400z"/></g>
<!-- fullscreen -->
<g transform="translate(634.500,117.700)" fill="#fff"><path d="M7 14H5v5h5v-2H7v-3zm-2-4h2V7h3V5H5v5zm12 7h-3v2h5v-5h-2v3zM14 5v2h3v3h2V5h-5z"/></g>
<!-- workspace controls -->
<g fill="none" stroke="#4b4846" stroke-width="1.200">
<circle cx="721.900" cy="565" r="10.500"/><path d="M721.900,549.500 v5 M721.900,575.500 v5 M706.400,565 h5 M732.400,565 h5"/>
<circle cx="721.900" cy="606.800" r="15"/><path d="M714.400,606.800 h15 M721.900,599.300 v15"/>
<circle cx="721.900" cy="640.700" r="15"/><path d="M714.400,640.700 h15"/>
</g>
<circle cx="721.900" cy="565" r="3.600" fill="#4b4846"/>
<!-- help ? -->
<circle cx="1456.600" cy="632.900" r="9.200" fill="none" stroke="#fff" stroke-width="1.500"/>
<text x="1456.600" y="637.600" font-size="13" text-anchor="middle" fill="#fff">?</text>
<!-- accessibility -->
<circle cx="1464.500" cy="680.900" r="22.700" fill="#0e3f70"/>
<circle cx="1464.500" cy="680.900" r="19" fill="none" stroke="#fff" stroke-width="1.600"/>
<circle cx="1464.500" cy="670.300" r="3.300" fill="#fff"/>
<path d="M1453.500,675.200 l9,1.300 h4 l9,-1.300 l0.400,2 l-8.400,2.200 v5 l3,10 l-2,0.700 l-4,-9.500 l-4,9.500 l-2,-0.700 l3,-10 v-5 l-8.400,-2.200 z" fill="#fff"/>
<!-- refresh icon -->
<path d="M271.600,122.500 A11,11 0 1 0 273.600,129" fill="none" stroke="#e6f5ea" stroke-width="1.100"/>
<path d="M272.800,118 v5.500 h-5.500" fill="none" stroke="#e6f5ea" stroke-width="1.100"/>
<!-- logo -->
<text fill="#fff" font-weight="bold" font-size="39" y="49"><tspan x="1361" textLength="25" lengthAdjust="spacingAndGlyphs">C</tspan><tspan x="1387" y="43.300" font-size="27">o</tspan><tspan x="1405" y="49" font-size="39" textLength="80" lengthAdjust="spacingAndGlyphs">derZ</tspan></text>
<circle cx="1395.200" cy="36" r="5.700" fill="none" stroke="#fff" stroke-width="3.600"/>
<rect x="1388.900" y="45.600" width="12.600" height="3.500" fill="#f6b21b"/>
<path d="M1485.300,42.800 l5,4.200 l-4.300,4.300" fill="none" stroke="#f0359a" stroke-width="3.600"/>
</svg>
<div class="abs" id="botline"></div>
</div>
</body>
</html>
